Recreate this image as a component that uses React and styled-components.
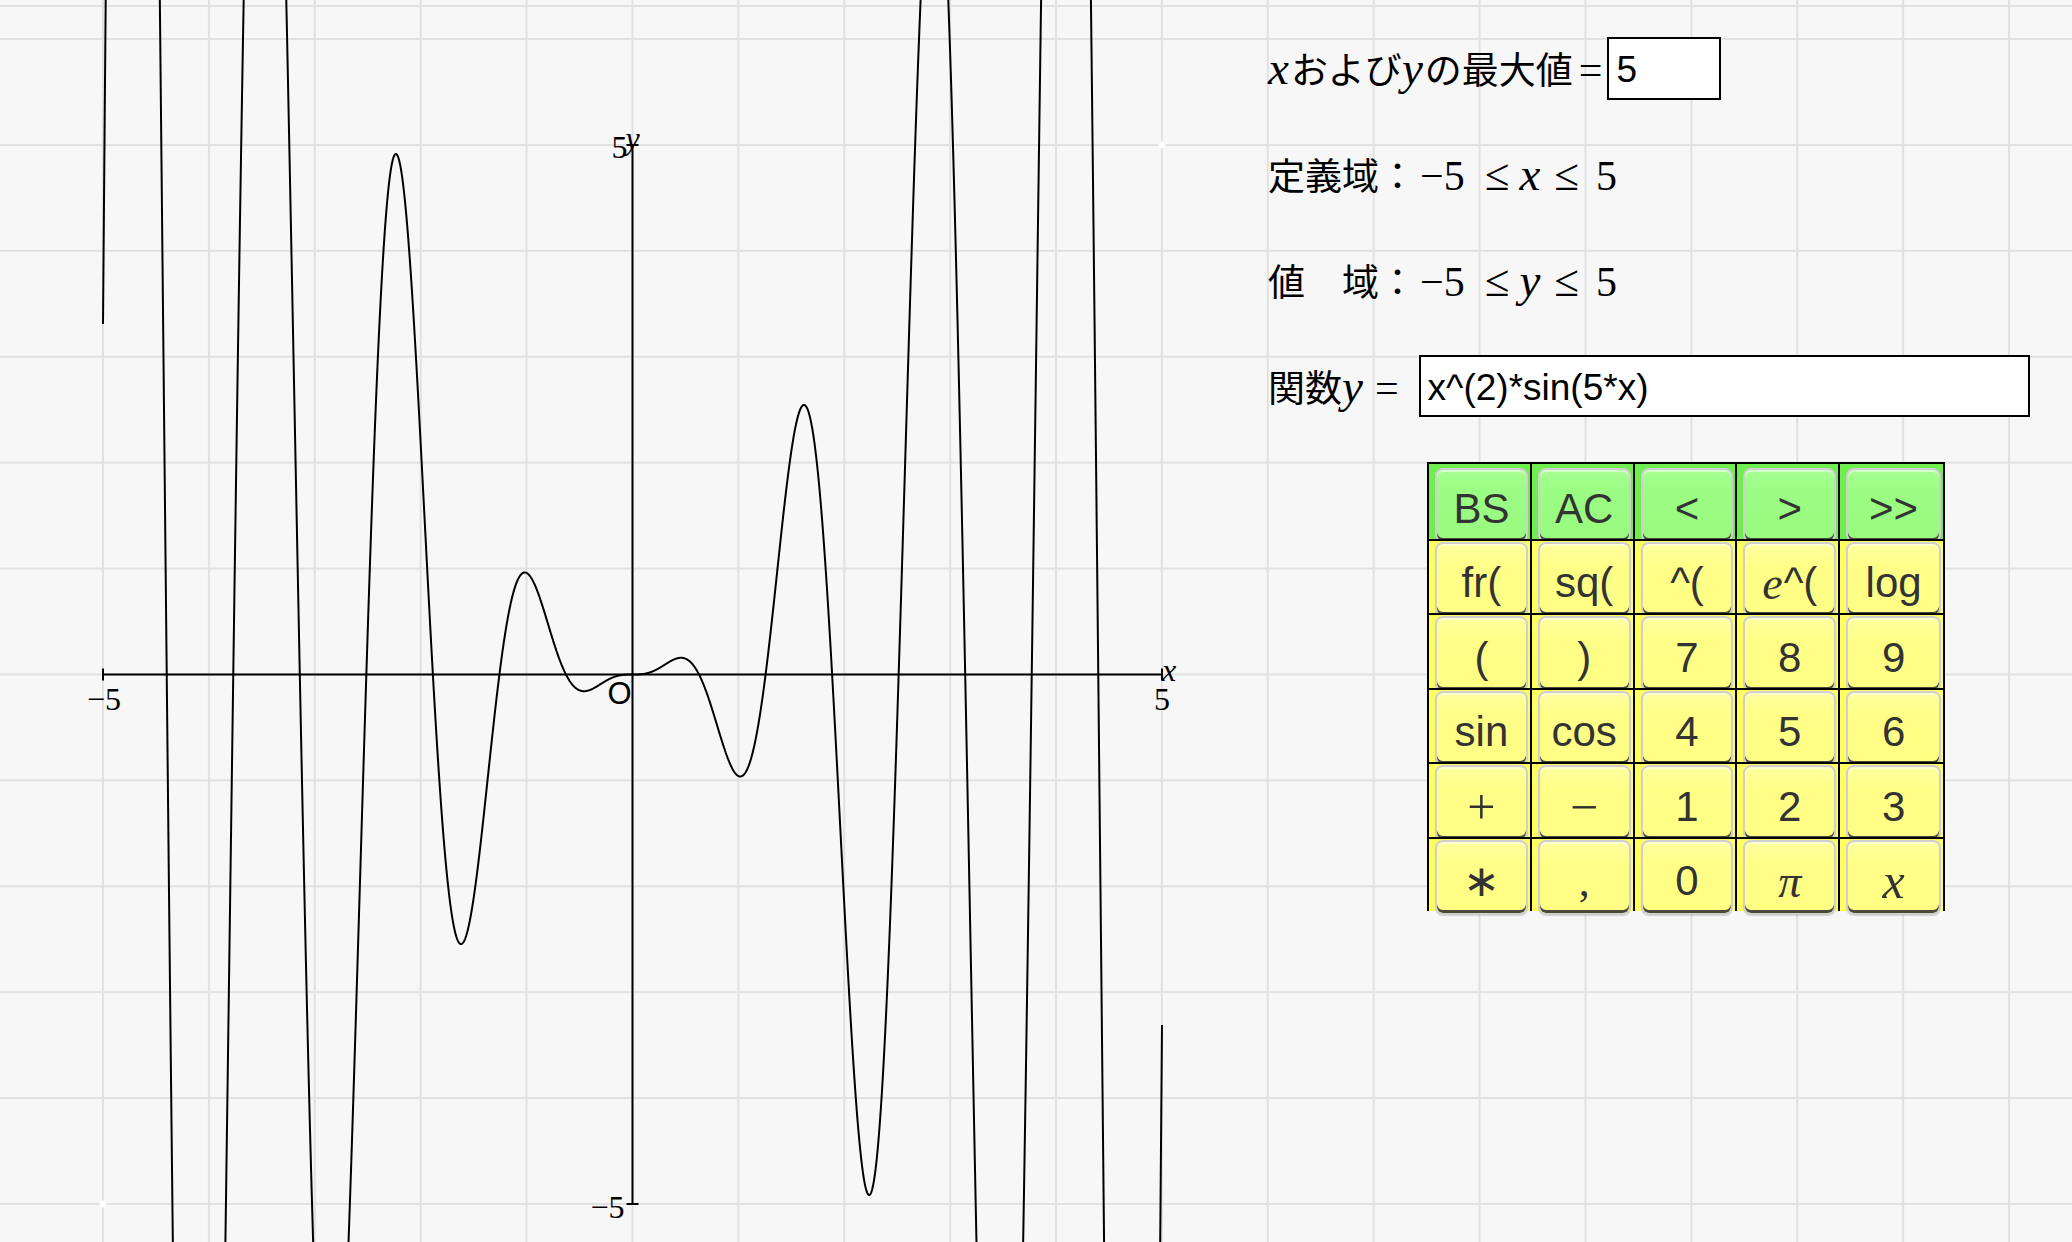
import React from "react";
import styled, { createGlobalStyle } from "styled-components";

const UNIT = 105.9;
const OX = 632.5;
const OY = 674.5;
const GRAPH_W = 1268;
const GRAPH_H = 1242;

const GlobalStyle = createGlobalStyle`
  html, body {
    margin: 0;
    padding: 0;
    background: #f7f7f7;
  }
  body {
    font-family: "Noto Sans CJK JP", "Liberation Sans", sans-serif;
    color: #000;
  }
`;

const Page = styled.div`
  display: flex;
  width: 2072px;
  height: 1242px;
  overflow: hidden;
  background-color: #f7f7f7;
  background-image:
    linear-gradient(to bottom, transparent 5px, #e1e1e1 5px, #e1e1e1 7px, transparent 7px),
    linear-gradient(to right, #e1e1e1 2px, transparent 2px),
    linear-gradient(to bottom, #e1e1e1 2px, transparent 2px);
  background-size: 100% 100%, ${UNIT}px ${UNIT}px, ${UNIT}px ${UNIT}px;
  background-position: 0 0, ${OX - 1 - UNIT * 5}px 0, 0 ${OY - 1 - UNIT * 6}px;
  background-repeat: no-repeat, repeat, repeat;
`;

const GraphArea = styled.div`
  flex: 0 0 ${GRAPH_W}px;
  height: ${GRAPH_H}px;
`;

const Panel = styled.div`
  display: flex;
  flex-direction: column;
  padding-top: 15px;
`;

const FieldRow = styled.div`
  display: flex;
  align-items: center;
  height: 106px;
`;

const Label = styled.span`
  font-family: "Noto Sans CJK JP", sans-serif;
  font-size: 37px;
  line-height: 1;
  white-space: pre;
`;

const Var = styled.span`
  font-family: "Liberation Serif", serif;
  font-style: italic;
  font-size: 47px;
  line-height: 1;
  margin-right: ${(p) => p.$after ?? 2}px;
  margin-left: ${(p) => p.$before ?? 0}px;
`;

const Num = styled.span`
  font-family: "Liberation Serif", serif;
  font-size: 42px;
  line-height: 1;
  margin-left: ${(p) => p.$before ?? 0}px;
  margin-right: ${(p) => p.$after ?? 0}px;
`;

const Rel = styled.span`
  font-family: "Liberation Serif", serif;
  font-size: 45px;
  line-height: 1;
  margin: 0 ${(p) => p.$right}px 0 ${(p) => p.$left}px;
`;

const Box = styled.input`
  box-sizing: border-box;
  width: ${(p) => p.$w}px;
  height: ${(p) => p.$h}px;
  margin-left: ${(p) => p.$gap}px;
  border: 2px solid #000;
  background: #fff;
  padding: 4px 7px 0;
  font-family: "Liberation Sans", Arial, sans-serif;
  font-size: 37px;
  color: #000;
  outline: none;
`;

const Keypad = styled.div`
  display: grid;
  grid-template-columns: repeat(5, 1fr);
  grid-auto-rows: 74.5px;
  width: 518px;
  box-sizing: border-box;
  margin: 23px 0 0 159px;
  border: 2px solid #000;
  border-bottom: none;
`;

const Cell = styled.div`
  box-sizing: border-box;
  background: ${(p) => (p.$green ? "#6fee4f" : "#ffff62")};
  border-right: ${(p) => (p.$last ? "none" : "2px solid #000")};
  border-top: ${(p) => (p.$first ? "none" : "2px solid #000")};
  padding: ${(p) => (p.$first ? "4px" : "1px")} 2px 0 6px;
`;

const Key = styled.button`
  box-sizing: border-box;
  display: flex;
  align-items: center;
  justify-content: center;
  width: 100%;
  height: calc(100% + 4px);
  padding: 8px 0 0;
  border: 2px solid #cfcfcf;
  border-radius: 8px;
  background: ${(p) =>
    p.$green
      ? "linear-gradient(to bottom, #a8ff92, #9bfd83 30%, #98fb80)"
      : "linear-gradient(to bottom, #ffffa0, #ffff88 30%, #ffff84)"};
  box-shadow: inset 0 -3px 0 #4a4a3a, inset 0 2px 0 rgba(255, 255, 255, 0.5),
    0 1px 1px rgba(0, 0, 0, 0.15);
  font-family: ${(p) =>
    p.$serif ? '"Liberation Serif", serif' : '"Liberation Sans", Arial, sans-serif'};
  font-style: ${(p) => (p.$italic ? "italic" : "normal")};
  font-size: ${(p) => p.$size || 42}px;
  color: #333;
  cursor: pointer;
`;

const ItalicE = styled.span`
  font-family: "Liberation Serif", serif;
  font-style: italic;
  font-size: 46px;
  margin-right: 1px;
`;

const keyRows = [
  [{ t: "BS" }, { t: "AC" }, { t: "<" }, { t: ">" }, { t: ">>" }],
  [{ t: "fr(" }, { t: "sq(" }, { t: "^(" }, { t: "e^(", e: true }, { t: "log" }],
  [{ t: "(" }, { t: ")" }, { t: "7" }, { t: "8" }, { t: "9" }],
  [{ t: "sin" }, { t: "cos" }, { t: "4" }, { t: "5" }, { t: "6" }],
  [
    { t: "+", serif: true, size: 50 },
    { t: "−", serif: true, size: 50 },
    { t: "1" },
    { t: "2" },
    { t: "3" },
  ],
  [
    { t: "∗", serif: true, size: 44 },
    { t: ",", serif: true, size: 44 },
    { t: "0" },
    { t: "π", serif: true, italic: true, size: 46 },
    { t: "x", serif: true, italic: true, size: 50 },
  ],
];

function buildCurve() {
  const pts = [];
  for (let i = 0; i <= 6000; i++) {
    const x = -5 + (10 * i) / 6000;
    const y = x * x * Math.sin(5 * x);
    const px = OX + x * UNIT;
    const py = Math.max(-400, Math.min(GRAPH_H + 400, OY - y * UNIT));
    pts.push(`${px.toFixed(2)},${py.toFixed(2)}`);
  }
  return "M" + pts.join("L");
}

const curve = buildCurve();

const Graph = () => {
  const xL = OX - 5 * UNIT;
  const xR = OX + 5 * UNIT;
  const yT = OY - 5 * UNIT;
  const yB = OY + 5 * UNIT;
  const serif = '"Liberation Serif", serif';
  return (
    <svg width={GRAPH_W} height={GRAPH_H} viewBox={`0 0 ${GRAPH_W} ${GRAPH_H}`}>
      <circle cx={xR} cy={yT} r="3.5" fill="#fff" />
      <circle cx={xL} cy={yB} r="3.5" fill="#fff" />
      <g stroke="#000" strokeWidth="2" fill="none">
        <line x1={xL} y1={OY} x2={xR} y2={OY} />
        <line x1={OX} y1={yT} x2={OX} y2={yB} />
        <line x1={xL} y1={OY - 6} x2={xL} y2={OY + 6} />
        <line x1={xR} y1={OY - 6} x2={xR} y2={OY + 6} />
        <line x1={OX - 6} y1={yT} x2={OX + 6} y2={yT} />
        <line x1={OX - 6} y1={yB} x2={OX + 6} y2={yB} />
      </g>
      <path d={curve} stroke="#000" strokeWidth="2" fill="none" strokeLinejoin="round" />
      <g fontFamily={serif} fontSize="32" fill="#000">
        <text x={xL + 1} y={OY + 35} textAnchor="middle">−5</text>
        <text x={xR} y={OY + 35} textAnchor="middle">5</text>
        <text x={xR} y={OY + 6} fontStyle="italic">x</text>
        <text x={OX - 5} y={yT + 13} textAnchor="end">5</text>
        <text x={OX - 7} y={yT + 4} fontStyle="italic">y</text>
        <text x={OX - 8} y={yB + 14} textAnchor="end">−5</text>
      </g>
      <text
        x={OX - 1}
        y={OY + 29}
        textAnchor="end"
        fontFamily='"Liberation Sans", Arial, sans-serif'
        fontSize="31"
        fill="#000"
      >
        O
      </text>
    </svg>
  );
};

export default function App() {
  return (
    <>
      <GlobalStyle />
      <Page>
        <GraphArea>
          <Graph />
        </GraphArea>
        <Panel>
          <FieldRow>
            <Label>
              <Var>x</Var>および<Var>y</Var>の最大値
              <Num $before={6}>=</Num>
            </Label>
            <Box $w={114} $h={63} $gap={5} defaultValue="5" />
          </FieldRow>
          <FieldRow>
            <Label>
              定義域：<Num $before={4}>−5</Num>
              <Rel $left={20} $right={10}>≤</Rel>
              <Var>x</Var>
              <Rel $left={12} $right={17}>≤</Rel>
              <Num>5</Num>
            </Label>
          </FieldRow>
          <FieldRow>
            <Label>
              値　域：<Num $before={4}>−5</Num>
              <Rel $left={20} $right={10}>≤</Rel>
              <Var>y</Var>
              <Rel $left={12} $right={17}>≤</Rel>
              <Num>5</Num>
            </Label>
          </FieldRow>
          <FieldRow>
            <Label>
              関数<Var>y</Var>
              <Num $before={10}>=</Num>
            </Label>
            <Box $w={611} $h={62} $gap={20} defaultValue="x^(2)*sin(5*x)" />
          </FieldRow>
          <Keypad>
            {keyRows.map((row, r) =>
              row.map((k, c) => (
                <Cell key={`${r}-${c}`} $green={r === 0} $first={r === 0} $last={c === 4}>
                  <Key $green={r === 0} $serif={k.serif} $italic={k.italic} $size={k.size}>
                    {k.e ? (
                      <>
                        <ItalicE>e</ItalicE>^(
                      </>
                    ) : (
                      k.t
                    )}
                  </Key>
                </Cell>
              ))
            )}
          </Keypad>
        </Panel>
      </Page>
    </>
  );
}
